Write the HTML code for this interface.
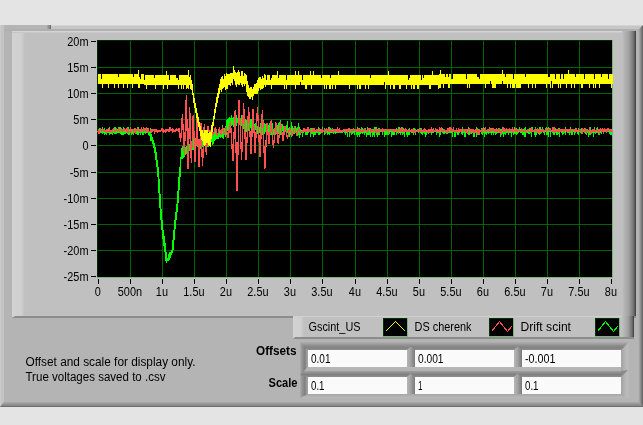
<!DOCTYPE html><html><head><meta charset="utf-8"><title>Scope</title>
<style>html,body{margin:0;padding:0;background:#e4e4e4;overflow:hidden}svg{display:block;transform:translateZ(0);will-change:transform}text{font-family:"Liberation Sans",sans-serif;font-size:12px;fill:#000}</style></head><body>
<svg width="643" height="425" viewBox="0 0 643 425">
<defs>
<linearGradient id="gl" x1="0" x2="1" y1="0" y2="0"><stop offset="0" stop-color="#d2d2d2"/><stop offset="0.7" stop-color="#d0d0d0"/><stop offset="1" stop-color="#c0c0c0"/></linearGradient>
<linearGradient id="gr" x1="0" x2="1" y1="0" y2="0"><stop offset="0" stop-color="#c0c0c0"/><stop offset="0.5" stop-color="#a0a0a0"/><stop offset="0.86" stop-color="#6c6c6c"/><stop offset="0.94" stop-color="#484848"/><stop offset="1" stop-color="#424242"/></linearGradient>
<linearGradient id="gre" x1="0" x2="1" y1="0" y2="0"><stop offset="0" stop-color="#b8b8b8"/><stop offset="0.4" stop-color="#b0b0b0"/><stop offset="1" stop-color="#5e5e5e"/></linearGradient>
<linearGradient id="gb" x1="0" x2="0" y1="0" y2="1"><stop offset="0" stop-color="#aaaaaa"/><stop offset="0.7" stop-color="#888888"/><stop offset="1" stop-color="#626262"/></linearGradient>
<linearGradient id="ft" x1="0" x2="0" y1="0" y2="1"><stop offset="0" stop-color="#a8a8a8"/><stop offset="0.3" stop-color="#8c8c8c"/><stop offset="0.55" stop-color="#848484"/><stop offset="1" stop-color="#a2a2a2"/></linearGradient>
<linearGradient id="fl" x1="0" x2="1" y1="0" y2="0"><stop offset="0" stop-color="#a8a8a8"/><stop offset="0.3" stop-color="#8c8c8c"/><stop offset="0.55" stop-color="#848484"/><stop offset="1" stop-color="#a2a2a2"/></linearGradient>
</defs>
<rect x="0" y="0" width="643" height="425" fill="#e4e4e4"/>
<rect x="0" y="25" width="643" height="382" fill="#b4b4b4"/>
<polygon points="0,25 4,25 4,402 0,407" fill="#c3c3c3"/>
<rect x="0" y="25" width="1" height="380" fill="#cacaca"/>
<rect x="51" y="25" width="592" height="4" fill="#c6c6c6"/>
<rect x="51" y="25" width="592" height="1" fill="#d4d4d4"/>
<rect x="47" y="25" width="1" height="4" fill="#a4a4a4"/><rect x="48" y="25" width="1" height="4" fill="#969696"/><rect x="49" y="25" width="1" height="4" fill="#868686"/><rect x="50" y="25" width="1" height="4" fill="#727272"/>
<rect x="4" y="29" width="635" height="2" fill="#b0b0b0"/>
<polygon points="0,407 4,402 643,402 643,407" fill="url(#gb)"/>
<polygon points="636,29 639,29 643,25 643,406 639,402 636,402" fill="url(#gre)"/>
<rect x="12" y="31" width="624" height="286" fill="#c0c0c0"/>
<rect x="12" y="31" width="13" height="286" fill="url(#gl)"/>
<rect x="12" y="31" width="612" height="1" fill="#d4d4d4"/><rect x="12" y="32" width="612" height="1" fill="#c8c8c8"/>
<rect x="622" y="31" width="14" height="286" fill="url(#gr)"/>
<polygon points="12,318 15,316 636,316 636,318" fill="#8c8c8c"/>
<rect x="97" y="40" width="515" height="237" fill="#000"/>
<path d="M130.5 40V277M162.5 40V277M194.5 40V277M226.5 40V277M258.5 40V277M290.5 40V277M322.5 40V277M355.5 40V277M387.5 40V277M419.5 40V277M451.5 40V277M483.5 40V277M515.5 40V277M547.5 40V277M579.5 40V277M97 67.5H612M97 93.5H612M97 119.5H612M97 145.5H612M97 172.5H612M97 198.5H612M97 224.5H612M97 250.5H612" stroke="#006400" stroke-width="1" fill="none" shape-rendering="crispEdges"/>
<rect x="97" y="40" width="1" height="237" fill="#002a00"/>
<rect x="97" y="40" width="515" height="1" fill="#002a00"/>
<rect x="612" y="40" width="1" height="238" fill="#7cb47c"/>
<rect x="97" y="277" width="516" height="1" fill="#7cb47c"/>
<path d="M98.5 279V284M130.5 279V284M162.5 279V284M194.5 279V284M226.5 279V284M258.5 279V284M290.5 279V284M322.5 279V284M355.5 279V284M387.5 279V284M419.5 279V284M451.5 279V284M483.5 279V284M515.5 279V284M547.5 279V284M579.5 279V284M611.5 279V284M91 41.5H96M91 67.5H96M91 93.5H96M91 119.5H96M91 145.5H96M91 172.5H96M91 198.5H96M91 224.5H96M91 250.5H96M91 276.5H96" stroke="#000" stroke-width="1" fill="none" shape-rendering="crispEdges"/>
<text transform="translate(88.5,45.8) scale(0.91,1)" text-anchor="end">20m</text>
<text transform="translate(88.5,71.8) scale(0.91,1)" text-anchor="end">15m</text>
<text transform="translate(88.5,97.8) scale(0.91,1)" text-anchor="end">10m</text>
<text transform="translate(88.5,123.8) scale(0.91,1)" text-anchor="end">5m</text>
<text transform="translate(88.5,149.8) scale(0.91,1)" text-anchor="end">0</text>
<text transform="translate(88.5,176.8) scale(0.91,1)" text-anchor="end">-5m</text>
<text transform="translate(88.5,202.8) scale(0.91,1)" text-anchor="end">-10m</text>
<text transform="translate(88.5,228.8) scale(0.91,1)" text-anchor="end">-15m</text>
<text transform="translate(88.5,254.8) scale(0.91,1)" text-anchor="end">-20m</text>
<text transform="translate(88.5,280.8) scale(0.91,1)" text-anchor="end">-25m</text>
<text transform="translate(97.9,296) scale(0.91,1)" text-anchor="middle">0</text>
<text transform="translate(129.9,296) scale(0.91,1)" text-anchor="middle">500n</text>
<text transform="translate(161.9,296) scale(0.91,1)" text-anchor="middle">1u</text>
<text transform="translate(193.9,296) scale(0.91,1)" text-anchor="middle">1.5u</text>
<text transform="translate(225.9,296) scale(0.91,1)" text-anchor="middle">2u</text>
<text transform="translate(257.9,296) scale(0.91,1)" text-anchor="middle">2.5u</text>
<text transform="translate(289.9,296) scale(0.91,1)" text-anchor="middle">3u</text>
<text transform="translate(321.9,296) scale(0.91,1)" text-anchor="middle">3.5u</text>
<text transform="translate(354.9,296) scale(0.91,1)" text-anchor="middle">4u</text>
<text transform="translate(386.9,296) scale(0.91,1)" text-anchor="middle">4.5u</text>
<text transform="translate(418.9,296) scale(0.91,1)" text-anchor="middle">5u</text>
<text transform="translate(450.9,296) scale(0.91,1)" text-anchor="middle">5.5u</text>
<text transform="translate(482.9,296) scale(0.91,1)" text-anchor="middle">6u</text>
<text transform="translate(514.9,296) scale(0.91,1)" text-anchor="middle">6.5u</text>
<text transform="translate(546.9,296) scale(0.91,1)" text-anchor="middle">7u</text>
<text transform="translate(578.9,296) scale(0.91,1)" text-anchor="middle">7.5u</text>
<text transform="translate(610.9,296) scale(0.91,1)" text-anchor="middle">8u</text>
<path d="M98.5 129V134M99.5 128V133M100.5 130V133M101.5 129V133M102.5 127V134M103.5 130V133M104.5 128V135M105.5 130V134M106.5 130V135M107.5 130V133M108.5 129V133M109.5 127V135M110.5 130V134M111.5 130V134M112.5 129V135M113.5 129V133M114.5 127V134M115.5 127V134M116.5 130V134M117.5 129V133M118.5 127V133M119.5 127V133M120.5 127V134M121.5 128V135M122.5 129V135M123.5 127V135M124.5 129V134M125.5 129V134M126.5 129V133M127.5 127V134M128.5 127V135M129.5 129V135M130.5 129V133M131.5 130V135M132.5 129V134M133.5 129V135M134.5 128V133M135.5 130V134M136.5 129V134M137.5 127V135M138.5 127V135M139.5 130V133M140.5 129V135M141.5 130V133M142.5 129V135M143.5 129V135M144.5 129V133M145.5 128V134M146.5 129V133M147.5 128V133M148.5 130V135M149.5 131V136M150.5 128V141M151.5 134V141M152.5 137V144M153.5 140V148M154.5 143V153M155.5 147V160M156.5 152V167M157.5 160V177M158.5 167V193M159.5 179V208M160.5 194V220M161.5 209V230M162.5 220V239M163.5 230V246M164.5 236V252M165.5 243V261M166.5 252V263M167.5 258V261M168.5 254V261M169.5 252V260M170.5 252V258M171.5 250V255M172.5 240V253M173.5 230V250M174.5 220V240M175.5 212V229M176.5 204V220M177.5 191V212M178.5 177V203M179.5 167V190M180.5 157V177M181.5 148V159M182.5 146V159M183.5 151V158M184.5 144V157M185.5 147V155M186.5 146V154M187.5 145V152M188.5 145V155M189.5 144V151M190.5 138V153M191.5 142V149M192.5 143V150M193.5 139V150M194.5 141V149M195.5 138V149M196.5 139V146M197.5 140V146M198.5 140V150M199.5 140V147M200.5 139V149M201.5 134V145M202.5 136V147M203.5 140V145M204.5 135V145M205.5 135V145M206.5 135V146M207.5 138V147M208.5 134V147M209.5 137V143M210.5 136V143M211.5 136V142M212.5 130V145M213.5 134V144M214.5 133V141M215.5 128V140M216.5 134V139M217.5 133V139M218.5 129V139M219.5 131V137M220.5 130V138M221.5 129V137M222.5 125V138M223.5 128V139M224.5 128V134M225.5 126V137M226.5 120V135M227.5 119V131M228.5 118V130M229.5 117V128M230.5 118V128M231.5 115V126M232.5 118V125M233.5 117V127M234.5 111V122M235.5 110V121M236.5 115V126M237.5 118V123M238.5 117V124M239.5 117V124M240.5 120V129M241.5 115V126M242.5 122V131M243.5 121V129M244.5 122V133M245.5 119V134M246.5 120V132M247.5 119V132M248.5 119V131M249.5 120V130M250.5 119V128M251.5 119V132M252.5 120V127M253.5 122V132M254.5 124V130M255.5 123V130M256.5 125V133M257.5 126V134M258.5 127V137M259.5 127V133M260.5 123V136M261.5 126V133M262.5 125V135M263.5 120V135M264.5 123V134M265.5 124V132M266.5 124V131M267.5 124V131M268.5 125V136M269.5 123V132M270.5 124V135M271.5 122V135M272.5 123V134M273.5 129V135M274.5 128V133M275.5 126V135M276.5 128V133M277.5 125V133M278.5 123V134M279.5 122V132M280.5 120V135M281.5 124V131M282.5 124V131M283.5 126V136M284.5 127V134M285.5 127V132M286.5 125V132M287.5 121V133M288.5 128V135M289.5 128V137M290.5 128V135M291.5 122V137M292.5 126V134M293.5 128V134M294.5 128V134M295.5 126V133M296.5 128V135M297.5 127V136M298.5 123V135M299.5 127V138M300.5 129V135M301.5 130V133M302.5 130V137M303.5 131V133M304.5 131V132M305.5 131V135M306.5 129V135M307.5 130V135M308.5 129V133M309.5 129V132M310.5 128V137M311.5 128V134M312.5 128V134M313.5 129V137M314.5 129V135M315.5 130V135M316.5 130V133M317.5 130V133M318.5 127V135M319.5 128V135M320.5 130V134M321.5 130V132M322.5 127V133M323.5 131V132M324.5 128V135M325.5 130V134M326.5 130V132M327.5 131V135M328.5 127V134M329.5 127V135M330.5 128V133M331.5 129V133M332.5 128V133M333.5 131V134M334.5 130V133M335.5 130V134M336.5 131V133M337.5 130V133M338.5 129V133M339.5 130V132M340.5 130V133M341.5 130V133M342.5 131V133M343.5 129V132M344.5 129V133M345.5 129V135M346.5 130V133M347.5 129V137M348.5 131V132M349.5 130V137M350.5 131V133M351.5 129V135M352.5 131V134M353.5 131V133M354.5 130V135M355.5 130V132M356.5 129V135M357.5 127V137M358.5 130V135M359.5 128V137M360.5 129V134M361.5 127V133M362.5 128V134M363.5 130V133M364.5 128V135M365.5 128V133M366.5 131V137M367.5 127V135M368.5 129V135M369.5 129V135M370.5 128V137M371.5 129V133M372.5 129V137M373.5 129V135M374.5 127V137M375.5 127V132M376.5 127V135M377.5 129V137M378.5 128V135M379.5 128V135M380.5 130V132M381.5 131V132M382.5 130V135M383.5 130V132M384.5 129V137M385.5 129V135M386.5 131V135M387.5 131V135M388.5 129V135M389.5 130V134M390.5 130V132M391.5 129V137M392.5 131V135M393.5 129V135M394.5 131V135M395.5 129V132M396.5 128V135M397.5 129V133M398.5 127V132M399.5 127V133M400.5 130V135M401.5 127V133M402.5 130V135M403.5 128V134M404.5 129V137M405.5 129V132M406.5 129V135M407.5 130V137M408.5 131V135M409.5 128V135M410.5 130V132M411.5 129V133M412.5 130V133M413.5 128V135M414.5 128V133M415.5 129V135M416.5 130V132M417.5 129V132M418.5 129V133M419.5 128V132M420.5 128V133M421.5 128V134M422.5 130V135M423.5 129V133M424.5 129V134M425.5 129V137M426.5 131V135M427.5 130V133M428.5 131V134M429.5 131V133M430.5 129V132M431.5 127V135M432.5 129V133M433.5 129V133M434.5 130V132M435.5 129V132M436.5 130V135M437.5 129V133M438.5 130V133M439.5 129V137M440.5 128V135M441.5 130V132M442.5 128V133M443.5 130V134M444.5 129V134M445.5 131V133M446.5 131V134M447.5 128V134M448.5 129V133M449.5 128V133M450.5 129V133M451.5 129V133M452.5 131V137M453.5 130V132M454.5 130V137M455.5 130V137M456.5 129V132M457.5 130V135M458.5 131V135M459.5 130V133M460.5 130V132M461.5 129V134M462.5 127V135M463.5 131V133M464.5 129V137M465.5 130V137M466.5 131V133M467.5 131V132M468.5 127V135M469.5 130V135M470.5 130V133M471.5 130V134M472.5 129V133M473.5 130V137M474.5 130V137M475.5 129V132M476.5 127V137M477.5 128V134M478.5 129V135M479.5 130V135M480.5 131V132M481.5 128V134M482.5 129V135M483.5 127V133M484.5 128V137M485.5 130V134M486.5 131V135M487.5 130V133M488.5 129V134M489.5 130V133M490.5 130V133M491.5 128V135M492.5 128V133M493.5 129V135M494.5 130V133M495.5 129V135M496.5 128V134M497.5 131V133M498.5 128V133M499.5 131V133M500.5 129V137M501.5 129V135M502.5 130V134M503.5 130V137M504.5 129V134M505.5 130V135M506.5 130V133M507.5 131V133M508.5 130V135M509.5 131V133M510.5 130V133M511.5 130V137M512.5 129V133M513.5 131V135M514.5 127V134M515.5 129V134M516.5 128V135M517.5 130V134M518.5 130V133M519.5 127V132M520.5 129V133M521.5 129V133M522.5 130V135M523.5 129V135M524.5 128V137M525.5 127V137M526.5 130V132M527.5 130V133M528.5 129V134M529.5 128V134M530.5 129V133M531.5 127V137M532.5 127V132M533.5 130V132M534.5 129V135M535.5 127V137M536.5 129V135M537.5 129V132M538.5 131V134M539.5 127V135M540.5 127V134M541.5 129V133M542.5 127V132M543.5 130V133M544.5 130V135M545.5 128V132M546.5 127V135M547.5 128V135M548.5 127V137M549.5 129V132M550.5 129V137M551.5 131V132M552.5 127V133M553.5 130V135M554.5 131V135M555.5 128V133M556.5 130V135M557.5 130V135M558.5 128V134M559.5 128V137M560.5 131V132M561.5 131V133M562.5 129V135M563.5 130V134M564.5 130V133M565.5 127V135M566.5 131V132M567.5 129V133M568.5 129V133M569.5 130V135M570.5 127V133M571.5 129V135M572.5 130V135M573.5 130V132M574.5 129V135M575.5 128V133M576.5 131V132M577.5 130V134M578.5 128V135M579.5 129V132M580.5 130V133M581.5 128V134M582.5 130V133M583.5 129V132M584.5 128V133M585.5 128V134M586.5 130V135M587.5 129V133M588.5 131V137M589.5 130V135M590.5 127V135M591.5 131V133M592.5 129V133M593.5 130V137M594.5 127V133M595.5 130V134M596.5 130V133M597.5 127V133M598.5 131V135M599.5 129V135M600.5 130V133M601.5 129V134M602.5 128V132M603.5 129V133M604.5 129V132M605.5 130V132M606.5 129V133M607.5 129V132M608.5 128V132M609.5 130V134M610.5 129V135M611.5 130V135M612.5 131V132" stroke="#00ff00" stroke-width="1" fill="none" shape-rendering="crispEdges"/>
<polyline points="98.0,131.8 98.5,129.6 99.0,133.7 99.5,131.5 100.0,130.3 100.5,129.2 101.0,130.3 101.5,130.7 102.0,130.1 102.5,129.9 103.0,129.3 103.5,129.6 104.0,130.3 104.5,131.2 105.0,130.9 105.5,130.9 106.0,130.1 106.5,131.4 107.0,129.6 107.5,130.8 108.0,130.0 108.5,129.1 109.0,131.1 109.5,129.9 110.0,130.8 110.5,131.8 111.0,131.5 111.5,131.1 112.0,131.3 112.5,131.7 113.0,129.4 113.5,129.0 114.0,129.9 114.5,129.5 115.0,131.6 115.5,131.4 116.0,130.5 116.5,129.5 117.0,130.9 117.5,130.6 118.0,130.3 118.5,129.2 119.0,129.6 119.5,132.0 120.0,129.5 120.5,130.4 121.0,129.7 121.5,131.3 122.0,131.3 122.5,129.8 123.0,129.8 123.5,130.3 124.0,129.7 124.5,131.7 125.0,129.2 125.5,129.7 126.0,130.9 126.5,127.9 127.0,130.4 127.5,131.5 128.0,129.1 128.5,129.4 129.0,131.9 129.5,131.8 130.0,131.6 130.5,129.8 131.0,131.8 131.5,130.8 132.0,129.7 132.5,129.4 133.0,129.8 133.5,131.0 134.0,129.0 134.5,131.0 135.0,129.9 135.5,131.4 136.0,129.2 136.5,130.2 137.0,130.9 137.5,129.5 138.0,130.2 138.5,129.9 139.0,129.9 139.5,130.1 140.0,131.6 140.5,130.1 141.0,131.2 141.5,129.0 142.0,130.3 142.5,130.2 143.0,130.4 143.5,129.0 144.0,130.9 144.5,129.3 145.0,130.1 145.5,129.4 146.0,130.6 146.5,129.3 147.0,131.4 147.5,129.6 148.0,131.8 148.5,130.4 149.0,131.8 149.5,131.7 150.0,131.5 150.5,131.4 151.0,130.2 151.5,131.5 152.0,129.7 152.5,130.6 153.0,129.4 153.5,131.2 154.0,129.1 154.5,133.8 155.0,129.4 155.5,130.7 156.0,129.9 156.5,130.7 157.0,131.0 157.5,132.8 158.0,130.4 158.5,130.9 159.0,131.5 159.5,130.2 160.0,130.1 160.5,131.4 161.0,131.0 161.5,129.4 162.0,129.9 162.5,129.2 163.0,131.7 163.5,128.9 164.0,132.0 164.5,131.4 165.0,131.9 165.5,131.9 166.0,129.5 166.5,131.8 167.0,130.1 167.5,129.5 168.0,129.8 168.5,129.4 169.0,131.8 169.5,129.8 170.0,127.5 170.5,130.2 171.0,129.8 171.5,130.1 172.0,129.8 172.5,129.1 173.0,131.9 173.5,130.6 174.0,131.7 174.5,130.6 175.0,131.2 175.5,130.1 176.0,129.4 176.5,129.2 177.0,130.8 177.5,129.9 178.0,129.9 178.5,131.6 179.0,128.1 180.6,141.8 182.4,113.9 184.4,155.9 186.3,95.2 188.1,169.0 189.7,107.3 191.3,162.6 193.2,114.6 195.1,162.1 197.1,118.3 198.9,167.0 200.9,123.5 202.5,166.4 204.3,124.4 206.3,154.5 208.1,126.4 210.0,136.1 211.9,127.0 213.5,135.5 215.4,127.3 217.4,135.7 219.4,127.6 221.0,134.9 222.6,127.1 224.4,135.3 226.0,127.6 228.2,137.7 230.4,120.8 232.9,161.0 235.1,110.8 237.1,191.0 239.1,99.7 241.6,159.6 243.6,103.5 246.1,159.7 248.6,107.4 251.1,153.9 253.1,108.9 255.1,152.9 257.5,107.1 259.9,157.0 262.4,109.7 264.8,169.0 267.0,122.6 269.0,143.5 271.2,120.4 273.4,147.7 275.8,122.5 278.3,144.1 280.5,121.9 283.0,141.0 285.0,126.2 287.5,138.4 289.7,127.3 292.1,135.3 294.6,127.8 296.6,134.1 298.8,128.8 300.8,133.0 303.0,130.0 303.5,129.1 304.0,131.1 304.5,131.1 305.0,129.2 305.5,130.1 306.0,131.5 306.5,129.2 307.0,131.7 307.5,129.3 308.0,126.8 308.5,131.5 309.0,129.9 309.5,129.3 310.0,129.6 310.5,132.8 311.0,131.8 311.5,131.3 312.0,131.3 312.5,130.4 313.0,131.2 313.5,129.1 314.0,129.3 314.5,129.1 315.0,131.1 315.5,130.7 316.0,130.3 316.5,129.9 317.0,129.2 317.5,129.3 318.0,131.5 318.5,130.8 319.0,130.5 319.5,129.5 320.0,131.8 320.5,129.5 321.0,131.3 321.5,132.0 322.0,129.3 322.5,129.3 323.0,131.7 323.5,130.3 324.0,130.1 324.5,130.3 325.0,129.5 325.5,130.9 326.0,129.4 326.5,131.1 327.0,129.1 327.5,130.6 328.0,130.4 328.5,130.0 329.0,131.1 329.5,129.7 330.0,130.9 330.5,130.5 331.0,131.3 331.5,130.9 332.0,131.9 332.5,130.8 333.0,129.7 333.5,129.8 334.0,132.0 334.5,131.0 335.0,129.5 335.5,129.9 336.0,129.8 336.5,131.7 337.0,131.7 337.5,129.0 338.0,130.3 338.5,131.9 339.0,129.1 339.5,128.7 340.0,131.7 340.5,130.7 341.0,130.3 341.5,131.2 342.0,131.3 342.5,131.6 343.0,130.9 343.5,129.9 344.0,129.3 344.5,131.3 345.0,130.9 345.5,130.3 346.0,130.9 346.5,131.0 347.0,129.5 347.5,131.3 348.0,130.5 348.5,129.1 349.0,129.5 349.5,131.8 350.0,129.3 350.5,130.6 351.0,130.5 351.5,131.5 352.0,130.2 352.5,129.6 353.0,130.2 353.5,129.4 354.0,130.1 354.5,129.8 355.0,129.0 355.5,130.3 356.0,130.1 356.5,129.7 357.0,131.8 357.5,129.7 358.0,130.2 358.5,129.4 359.0,131.4 359.5,130.4 360.0,129.7 360.5,130.1 361.0,131.5 361.5,130.4 362.0,130.6 362.5,131.5 363.0,131.6 363.5,130.1 364.0,130.3 364.5,129.0 365.0,129.8 365.5,129.9 366.0,130.3 366.5,131.0 367.0,131.8 367.5,129.2 368.0,131.7 368.5,129.4 369.0,128.4 369.5,129.6 370.0,129.9 370.5,130.7 371.0,129.6 371.5,131.4 372.0,130.2 372.5,130.8 373.0,131.9 373.5,131.7 374.0,130.9 374.5,130.5 375.0,129.2 375.5,131.0 376.0,129.4 376.5,131.5 377.0,130.7 377.5,131.7 378.0,129.7 378.5,130.8 379.0,129.5 379.5,131.1 380.0,129.9 380.5,130.3 381.0,131.0 381.5,130.1 382.0,129.1 382.5,131.2 383.0,131.4 383.5,130.5 384.0,129.4 384.5,130.2 385.0,129.3 385.5,130.0 386.0,130.7 386.5,129.9 387.0,129.8 387.5,129.9 388.0,130.5 388.5,132.0 389.0,130.0 389.5,130.5 390.0,129.6 390.5,129.4 391.0,129.3 391.5,130.2 392.0,130.2 392.5,130.2 393.0,129.1 393.5,130.4 394.0,129.2 394.5,130.6 395.0,129.4 395.5,131.1 396.0,131.7 396.5,130.9 397.0,131.0 397.5,130.3 398.0,129.3 398.5,131.4 399.0,129.8 399.5,130.3 400.0,130.3 400.5,131.8 401.0,128.2 401.5,131.3 402.0,131.1 402.5,129.2 403.0,130.8 403.5,131.0 404.0,131.3 404.5,129.2 405.0,131.7 405.5,127.8 406.0,132.0 406.5,129.7 407.0,130.4 407.5,130.7 408.0,131.2 408.5,130.1 409.0,131.1 409.5,131.3 410.0,130.7 410.5,131.0 411.0,131.7 411.5,129.1 412.0,131.6 412.5,130.9 413.0,129.9 413.5,131.9 414.0,130.8 414.5,131.8 415.0,130.4 415.5,131.9 416.0,131.9 416.5,131.4 417.0,131.3 417.5,129.8 418.0,130.0 418.5,130.9 419.0,131.4 419.5,131.6 420.0,129.0 420.5,131.5 421.0,131.9 421.5,130.2 422.0,131.3 422.5,130.4 423.0,130.0 423.5,129.5 424.0,131.3 424.5,129.9 425.0,131.7 425.5,129.4 426.0,131.4 426.5,131.3 427.0,130.6 427.5,130.5 428.0,131.4 428.5,131.9 429.0,129.2 429.5,131.1 430.0,133.3 430.5,130.4 431.0,131.4 431.5,129.7 432.0,131.7 432.5,130.6 433.0,130.8 433.5,129.6 434.0,131.1 434.5,130.7 435.0,130.6 435.5,129.1 436.0,130.1 436.5,130.9 437.0,129.5 437.5,130.0 438.0,131.6 438.5,130.8 439.0,131.8 439.5,129.3 440.0,130.8 440.5,129.4 441.0,130.0 441.5,127.6 442.0,130.7 442.5,130.4 443.0,131.7 443.5,130.8 444.0,129.4 444.5,129.8 445.0,130.9 445.5,131.0 446.0,130.3 446.5,131.9 447.0,132.2 447.5,131.8 448.0,128.2 448.5,129.8 449.0,131.2 449.5,130.5 450.0,127.5 450.5,131.0 451.0,130.8 451.5,129.3 452.0,129.8 452.5,130.4 453.0,129.7 453.5,128.5 454.0,131.4 454.5,131.5 455.0,130.9 455.5,131.2 456.0,131.9 456.5,127.7 457.0,130.4 457.5,131.5 458.0,130.9 458.5,129.7 459.0,131.1 459.5,129.4 460.0,129.8 460.5,129.5 461.0,131.5 461.5,129.5 462.0,130.0 462.5,129.3 463.0,129.2 463.5,131.0 464.0,130.4 464.5,129.8 465.0,130.1 465.5,132.0 466.0,129.3 466.5,131.7 467.0,131.2 467.5,134.4 468.0,130.5 468.5,131.4 469.0,129.9 469.5,129.1 470.0,129.8 470.5,131.5 471.0,129.7 471.5,130.8 472.0,131.7 472.5,131.3 473.0,129.4 473.5,130.9 474.0,132.4 474.5,131.5 475.0,130.6 475.5,129.8 476.0,131.8 476.5,130.2 477.0,129.4 477.5,129.7 478.0,134.5 478.5,130.7 479.0,130.1 479.5,131.9 480.0,130.1 480.5,131.5 481.0,131.3 481.5,130.7 482.0,129.9 482.5,131.2 483.0,129.1 483.5,129.4 484.0,129.3 484.5,129.5 485.0,130.7 485.5,129.1 486.0,131.2 486.5,131.5 487.0,130.4 487.5,130.3 488.0,129.3 488.5,129.8 489.0,130.8 489.5,129.3 490.0,131.7 490.5,129.7 491.0,131.0 491.5,130.2 492.0,129.1 492.5,131.1 493.0,128.3 493.5,131.3 494.0,129.7 494.5,130.3 495.0,131.4 495.5,131.4 496.0,129.2 496.5,131.9 497.0,129.7 497.5,130.9 498.0,130.6 498.5,130.3 499.0,129.1 499.5,131.9 500.0,131.8 500.5,131.4 501.0,134.2 501.5,131.8 502.0,130.9 502.5,129.1 503.0,126.9 503.5,131.9 504.0,129.9 504.5,129.4 505.0,131.9 505.5,129.8 506.0,130.6 506.5,129.4 507.0,129.9 507.5,129.9 508.0,129.3 508.5,131.5 509.0,130.7 509.5,129.6 510.0,130.4 510.5,130.8 511.0,129.9 511.5,129.7 512.0,130.1 512.5,129.0 513.0,131.6 513.5,130.7 514.0,129.9 514.5,129.9 515.0,129.5 515.5,131.6 516.0,129.2 516.5,130.3 517.0,129.3 517.5,131.9 518.0,129.5 518.5,130.1 519.0,130.8 519.5,131.5 520.0,131.2 520.5,131.3 521.0,131.4 521.5,131.7 522.0,129.1 522.5,130.5 523.0,130.7 523.5,131.4 524.0,130.8 524.5,130.4 525.0,131.2 525.5,130.2 526.0,130.2 526.5,131.4 527.0,130.5 527.5,129.6 528.0,129.4 528.5,130.7 529.0,131.8 529.5,131.5 530.0,131.9 530.5,130.3 531.0,129.0 531.5,130.7 532.0,131.8 532.5,130.6 533.0,130.6 533.5,131.1 534.0,130.1 534.5,130.1 535.0,131.0 535.5,129.3 536.0,130.2 536.5,130.7 537.0,131.9 537.5,130.3 538.0,132.0 538.5,130.6 539.0,129.5 539.5,131.9 540.0,130.5 540.5,131.7 541.0,131.5 541.5,131.7 542.0,129.5 542.5,130.5 543.0,129.6 543.5,130.9 544.0,130.1 544.5,130.9 545.0,130.2 545.5,129.9 546.0,129.0 546.5,131.5 547.0,131.0 547.5,130.5 548.0,129.8 548.5,130.6 549.0,130.7 549.5,129.4 550.0,131.3 550.5,129.3 551.0,130.6 551.5,130.8 552.0,131.7 552.5,129.4 553.0,127.3 553.5,131.6 554.0,129.2 554.5,128.4 555.0,131.7 555.5,131.9 556.0,130.9 556.5,129.1 557.0,131.6 557.5,131.7 558.0,129.9 558.5,131.9 559.0,131.8 559.5,130.2 560.0,129.7 560.5,131.6 561.0,131.4 561.5,129.5 562.0,129.6 562.5,129.9 563.0,129.3 563.5,130.2 564.0,129.2 564.5,131.5 565.0,129.7 565.5,129.9 566.0,129.1 566.5,130.0 567.0,131.1 567.5,129.8 568.0,129.4 568.5,131.5 569.0,129.5 569.5,131.2 570.0,131.9 570.5,131.9 571.0,129.7 571.5,129.4 572.0,129.8 572.5,130.8 573.0,129.7 573.5,129.6 574.0,129.4 574.5,130.6 575.0,131.3 575.5,131.0 576.0,129.9 576.5,129.3 577.0,131.6 577.5,131.0 578.0,130.7 578.5,130.5 579.0,129.2 579.5,129.7 580.0,131.2 580.5,130.2 581.0,131.3 581.5,131.6 582.0,132.3 582.5,134.2 583.0,129.7 583.5,130.1 584.0,129.5 584.5,131.7 585.0,131.1 585.5,129.1 586.0,129.6 586.5,132.6 587.0,130.9 587.5,130.7 588.0,130.5 588.5,131.8 589.0,130.7 589.5,129.3 590.0,131.0 590.5,131.6 591.0,131.1 591.5,133.5 592.0,129.6 592.5,131.2 593.0,131.1 593.5,131.2 594.0,129.8 594.5,131.8 595.0,131.8 595.5,131.2 596.0,130.9 596.5,129.2 597.0,130.3 597.5,131.8 598.0,131.3 598.5,131.1 599.0,129.8 599.5,131.9 600.0,130.6 600.5,129.2 601.0,130.2 601.5,129.9 602.0,131.1 602.5,129.7 603.0,130.5 603.5,131.8 604.0,129.9 604.5,129.4 605.0,130.0 605.5,130.6 606.0,129.5 606.5,130.8 607.0,131.3 607.5,129.3 608.0,130.1 608.5,129.2 609.0,129.6 609.5,130.3 610.0,130.0 610.5,130.1 611.0,131.7 611.5,129.3 612.0,131.9" stroke="#ff5050" stroke-width="1.3" fill="none" shape-rendering="crispEdges"/>
<path d="M98.5 74V84M99.5 74V84M100.5 74V84M101.5 79V84M102.5 74V88M103.5 74V84M104.5 74V84M105.5 74V84M106.5 74V84M107.5 74V84M108.5 74V88M109.5 74V84M110.5 74V84M111.5 74V84M112.5 74V84M113.5 74V84M114.5 74V88M115.5 74V84M116.5 74V84M117.5 74V84M118.5 77V88M119.5 74V84M120.5 74V84M121.5 74V84M122.5 74V84M123.5 74V88M124.5 74V84M125.5 74V84M126.5 74V84M127.5 74V88M128.5 74V84M129.5 74V84M130.5 74V84M131.5 74V84M132.5 74V88M133.5 77V84M134.5 74V84M135.5 74V84M136.5 74V84M137.5 74V84M138.5 70V88M139.5 77V88M140.5 79V84M141.5 74V84M142.5 74V84M143.5 74V84M144.5 80V85M145.5 75V85M146.5 75V89M147.5 75V85M148.5 75V85M149.5 75V85M150.5 75V85M151.5 75V85M152.5 75V85M153.5 75V85M154.5 78V85M155.5 75V89M156.5 75V85M157.5 75V85M158.5 75V85M159.5 75V85M160.5 75V85M161.5 75V85M162.5 75V85M163.5 75V89M164.5 75V85M165.5 75V85M166.5 71V85M167.5 75V89M168.5 75V85M169.5 80V85M170.5 75V85M171.5 75V85M172.5 75V85M173.5 75V85M174.5 75V85M175.5 75V85M176.5 78V85M177.5 78V85M178.5 80V89M179.5 75V85M180.5 75V85M181.5 75V89M182.5 75V85M183.5 75V89M184.5 75V85M185.5 75V85M186.5 75V89M187.5 75V88M188.5 70V89M189.5 77V85M190.5 75V89M191.5 80V90M192.5 84V95M193.5 93V103M194.5 98V108M195.5 103V113M196.5 108V118M197.5 113V123M198.5 117V127M199.5 122V131M200.5 126V136M201.5 130V140M202.5 130V141M203.5 133V145M204.5 130V146M205.5 130V145M206.5 130V143M207.5 130V143M208.5 133V145M209.5 132V146M210.5 132V147M211.5 125V139M212.5 122V132M213.5 116V126M214.5 109V119M215.5 103V113M216.5 97V107M217.5 93V103M218.5 88V98M219.5 84V94M220.5 79V90M221.5 77V92M222.5 76V89M223.5 79V88M224.5 74V87M225.5 76V90M226.5 73V89M227.5 74V89M228.5 74V85M229.5 74V85M230.5 73V86M231.5 73V83M232.5 73V85M233.5 66V79M234.5 70V81M235.5 72V85M236.5 73V87M237.5 72V84M238.5 70V85M239.5 72V85M240.5 76V83M241.5 71V85M242.5 71V87M243.5 76V84M244.5 73V86M245.5 74V84M246.5 75V92M247.5 81V96M248.5 85V97M249.5 88V99M250.5 87V99M251.5 87V97M252.5 89V100M253.5 87V96M254.5 84V94M255.5 84V94M256.5 83V94M257.5 80V94M258.5 78V91M259.5 77V88M260.5 77V90M261.5 79V89M262.5 76V89M263.5 78V88M264.5 74V85M265.5 75V87M266.5 80V85M267.5 75V85M268.5 75V85M269.5 75V85M270.5 80V85M271.5 78V89M272.5 75V85M273.5 75V85M274.5 75V85M275.5 75V85M276.5 75V85M277.5 71V85M278.5 78V85M279.5 75V85M280.5 75V85M281.5 75V85M282.5 75V85M283.5 75V85M284.5 75V89M285.5 75V85M286.5 80V89M287.5 75V85M288.5 75V85M289.5 75V85M290.5 75V85M291.5 75V85M292.5 75V85M293.5 75V85M294.5 75V85M295.5 71V89M296.5 75V85M297.5 75V85M298.5 71V85M299.5 75V85M300.5 75V82M301.5 75V85M302.5 80V85M303.5 75V85M304.5 75V85M305.5 75V89M306.5 75V89M307.5 75V85M308.5 75V85M309.5 75V85M310.5 71V85M311.5 75V89M312.5 75V85M313.5 71V85M314.5 75V85M315.5 75V85M316.5 75V85M317.5 75V85M318.5 75V85M319.5 75V85M320.5 75V85M321.5 78V85M322.5 75V85M323.5 75V85M324.5 75V89M325.5 75V85M326.5 75V89M327.5 75V85M328.5 75V85M329.5 75V89M330.5 78V89M331.5 75V85M332.5 75V89M333.5 75V85M334.5 75V85M335.5 75V89M336.5 75V85M337.5 75V85M338.5 71V85M339.5 75V85M340.5 75V85M341.5 75V85M342.5 75V85M343.5 75V85M344.5 75V85M345.5 75V85M346.5 75V85M347.5 75V85M348.5 75V85M349.5 75V89M350.5 75V85M351.5 75V85M352.5 75V85M353.5 75V85M354.5 75V85M355.5 75V85M356.5 75V85M357.5 75V89M358.5 75V85M359.5 75V89M360.5 75V89M361.5 75V85M362.5 75V85M363.5 75V85M364.5 75V85M365.5 75V89M366.5 75V85M367.5 75V85M368.5 75V89M369.5 75V85M370.5 78V85M371.5 75V85M372.5 75V85M373.5 75V85M374.5 75V85M375.5 75V85M376.5 75V85M377.5 75V85M378.5 75V85M379.5 75V85M380.5 75V85M381.5 75V85M382.5 75V85M383.5 75V85M384.5 75V82M385.5 75V89M386.5 75V85M387.5 75V85M388.5 71V85M389.5 75V85M390.5 75V89M391.5 75V85M392.5 75V85M393.5 75V89M394.5 75V89M395.5 75V85M396.5 75V85M397.5 75V85M398.5 75V85M399.5 75V89M400.5 75V89M401.5 75V85M402.5 75V85M403.5 75V85M404.5 75V85M405.5 75V85M406.5 75V89M407.5 75V85M408.5 80V85M409.5 78V85M410.5 75V85M411.5 75V89M412.5 75V85M413.5 75V89M414.5 75V89M415.5 75V85M416.5 75V85M417.5 75V89M418.5 75V89M419.5 75V85M420.5 75V85M421.5 80V85M422.5 75V85M423.5 78V85M424.5 75V85M425.5 75V85M426.5 75V85M427.5 75V85M428.5 75V85M429.5 75V89M430.5 75V89M431.5 75V85M432.5 71V85M433.5 75V85M434.5 75V85M435.5 75V85M436.5 75V85M437.5 75V85M438.5 75V89M439.5 74V88M440.5 70V88M441.5 74V84M442.5 74V84M443.5 74V88M444.5 74V84M445.5 77V84M446.5 74V84M447.5 74V84M448.5 77V88M449.5 74V88M450.5 74V84M451.5 79V84M452.5 79V84M453.5 74V84M454.5 74V84M455.5 74V84M456.5 74V84M457.5 74V84M458.5 74V84M459.5 74V84M460.5 74V84M461.5 74V84M462.5 74V84M463.5 74V84M464.5 74V84M465.5 74V84M466.5 79V84M467.5 74V88M468.5 74V84M469.5 74V88M470.5 74V84M471.5 74V84M472.5 74V84M473.5 74V84M474.5 74V84M475.5 74V84M476.5 74V84M477.5 77V84M478.5 77V84M479.5 79V84M480.5 74V84M481.5 74V84M482.5 74V84M483.5 74V84M484.5 74V84M485.5 74V88M486.5 74V84M487.5 74V84M488.5 74V84M489.5 74V84M490.5 74V81M491.5 74V84M492.5 74V88M493.5 74V88M494.5 74V88M495.5 74V88M496.5 74V84M497.5 74V84M498.5 74V84M499.5 74V84M500.5 74V84M501.5 74V84M502.5 70V81M503.5 74V84M504.5 74V84M505.5 77V84M506.5 74V84M507.5 74V88M508.5 74V84M509.5 74V84M510.5 74V88M511.5 74V84M512.5 74V88M513.5 79V88M514.5 74V88M515.5 74V84M516.5 74V88M517.5 74V88M518.5 74V88M519.5 74V88M520.5 74V88M521.5 74V84M522.5 74V84M523.5 74V84M524.5 74V84M525.5 77V84M526.5 74V84M527.5 74V84M528.5 74V88M529.5 74V84M530.5 74V84M531.5 74V84M532.5 74V88M533.5 74V84M534.5 74V84M535.5 74V88M536.5 74V84M537.5 74V84M538.5 74V84M539.5 74V84M540.5 74V84M541.5 74V84M542.5 74V84M543.5 74V84M544.5 74V84M545.5 74V84M546.5 74V88M547.5 74V84M548.5 77V84M549.5 77V84M550.5 74V88M551.5 74V81M552.5 74V88M553.5 74V84M554.5 74V84M555.5 79V84M556.5 74V84M557.5 74V84M558.5 74V88M559.5 74V84M560.5 79V88M561.5 74V84M562.5 74V84M563.5 79V84M564.5 74V84M565.5 74V84M566.5 74V88M567.5 74V84M568.5 70V84M569.5 74V84M570.5 74V84M571.5 74V88M572.5 74V84M573.5 74V84M574.5 74V88M575.5 77V84M576.5 74V84M577.5 74V84M578.5 74V84M579.5 74V84M580.5 74V84M581.5 74V88M582.5 74V88M583.5 74V84M584.5 79V84M585.5 74V84M586.5 74V84M587.5 74V84M588.5 74V84M589.5 74V88M590.5 74V84M591.5 74V84M592.5 74V84M593.5 74V88M594.5 79V84M595.5 74V88M596.5 74V84M597.5 74V84M598.5 74V84M599.5 74V88M600.5 74V84M601.5 77V84M602.5 74V84M603.5 74V84M604.5 74V84M605.5 74V84M606.5 74V84M607.5 74V84M608.5 79V84M609.5 74V84M610.5 74V84M611.5 74V88M612.5 74V84" stroke="#ffff00" stroke-width="1" fill="none" shape-rendering="crispEdges"/>
<rect x="293" y="316" width="341" height="22" fill="#c0c0c0"/>
<rect x="293" y="316" width="11" height="22" fill="url(#gl)"/>
<rect x="293" y="316" width="341" height="1" fill="#d0d0d0"/>
<rect x="622" y="316" width="12" height="22" fill="url(#gr)"/>
<polygon points="293,339 295,337 634,337 634,339" fill="#8c8c8c"/>
<rect x="383" y="318" width="25" height="19" fill="#7cb47c"/><rect x="383" y="318" width="24" height="18" fill="#003400"/><rect x="384" y="319" width="23" height="17" fill="#000"/>
<polyline points="385.5,331.5 395.5,321.5 405.5,331.5" stroke="#ffff00" stroke-width="1" fill="none" shape-rendering="crispEdges"/>
<rect x="489" y="318" width="25" height="19" fill="#7cb47c"/><rect x="489" y="318" width="24" height="18" fill="#003400"/><rect x="490" y="319" width="23" height="17" fill="#000"/>
<polyline points="491.5,331.5 499.5,321.5 507.5,331.5 511.5,326.5" stroke="#ff5050" stroke-width="1" fill="none" shape-rendering="crispEdges"/>
<rect x="595" y="318" width="25" height="19" fill="#7cb47c"/><rect x="595" y="318" width="24" height="18" fill="#003400"/><rect x="596" y="319" width="23" height="17" fill="#000"/>
<polyline points="597.5,331.5 605.5,321.5 613.5,331.5 617.5,326.5" stroke="#00ff00" stroke-width="1" fill="none" shape-rendering="crispEdges"/>
<text x="308.5" y="331" textLength="52" lengthAdjust="spacingAndGlyphs">Gscint_US</text>
<text x="414.5" y="331" textLength="57" lengthAdjust="spacingAndGlyphs">DS cherenk</text>
<text x="520.5" y="331" textLength="50.5" lengthAdjust="spacingAndGlyphs">Drift scint</text>
<defs>
<linearGradient id="at" x1="0" x2="0" y1="0" y2="1"><stop offset="0" stop-color="#b0b0b0"/><stop offset="0.45" stop-color="#8e8e8e"/><stop offset="0.7" stop-color="#828282"/><stop offset="1" stop-color="#8e8e8e"/></linearGradient>
<linearGradient id="al" x1="0" x2="1" y1="0" y2="0"><stop offset="0" stop-color="#acacac"/><stop offset="0.3" stop-color="#929292"/><stop offset="0.65" stop-color="#7e7e7e"/><stop offset="0.8" stop-color="#9a9a9a"/><stop offset="1" stop-color="#a2a2a2"/></linearGradient>
<linearGradient id="ac" x1="0" x2="1" y1="0" y2="0"><stop offset="0" stop-color="#b6b6b6"/><stop offset="0.35" stop-color="#a8a8a8"/><stop offset="1" stop-color="#7a7a7a"/></linearGradient>
<linearGradient id="arr" x1="0" x2="1" y1="0" y2="0"><stop offset="0" stop-color="#a2a2a2"/><stop offset="0.6" stop-color="#b8b8b8"/><stop offset="1" stop-color="#bababa"/></linearGradient>
<linearGradient id="abb" x1="0" x2="0" y1="0" y2="1"><stop offset="0" stop-color="#a6a6a6"/><stop offset="1" stop-color="#bababa"/></linearGradient>
<linearGradient id="arow" x1="0" x2="0" y1="0" y2="1"><stop offset="0" stop-color="#b8b8b8"/><stop offset="0.38" stop-color="#b2b2b2"/><stop offset="0.42" stop-color="#9e9e9e"/><stop offset="0.75" stop-color="#808080"/><stop offset="1" stop-color="#8e8e8e"/></linearGradient>
</defs>
<rect x="300" y="342" width="329" height="56" fill="#bcbcbc"/>
<rect x="621" y="342" width="8" height="56" fill="url(#arr)"/>
<rect x="300" y="394" width="329" height="4" fill="url(#abb)"/>
<polygon points="621,394 629,394 629,398 625,398" fill="url(#arr)"/>
<polygon points="300,342 629,342 621,350 300,350" fill="url(#at)"/>
<rect x="300" y="367" width="321" height="10" fill="url(#arow)"/>
<polygon points="621,371 628,370 621,377" fill="#8a8a8a"/>
<polygon points="300,342 308,350 308,367 300,375" fill="url(#al)"/>
<polygon points="300,375 308,377 308,394 300,398" fill="url(#al)"/>
<polygon points="407,350 410.5,346.5 415,350 415,367 407,367" fill="url(#ac)"/>
<polygon points="407,377 410.5,373.5 415,377 415,394 407,394" fill="url(#ac)"/>
<polygon points="514,350 517.5,346.5 522,350 522,367 514,367" fill="url(#ac)"/>
<polygon points="514,377 517.5,373.5 522,377 522,394 514,394" fill="url(#ac)"/>
<rect x="308" y="350" width="99" height="17" fill="#fafafa"/>
<text x="311" y="362.7" textLength="19.5" lengthAdjust="spacingAndGlyphs">0.01</text>
<rect x="308" y="377" width="99" height="17" fill="#fafafa"/>
<text x="311" y="389.7" textLength="13.5" lengthAdjust="spacingAndGlyphs">0.1</text>
<rect x="415" y="350" width="99" height="17" fill="#fafafa"/>
<text x="418" y="362.7" textLength="25.5" lengthAdjust="spacingAndGlyphs">0.001</text>
<rect x="415" y="377" width="99" height="17" fill="#fafafa"/>
<text x="418" y="389.7" textLength="4.5" lengthAdjust="spacingAndGlyphs">1</text>
<rect x="522" y="350" width="99" height="17" fill="#fafafa"/>
<text x="525" y="362.7" textLength="30.5" lengthAdjust="spacingAndGlyphs">-0.001</text>
<rect x="522" y="377" width="99" height="17" fill="#fafafa"/>
<text x="525" y="389.7" textLength="13.5" lengthAdjust="spacingAndGlyphs">0.1</text>
<text x="25.5" y="366" textLength="170" lengthAdjust="spacingAndGlyphs">Offset and scale for display only.</text>
<text x="25.5" y="381" textLength="140" lengthAdjust="spacingAndGlyphs">True voltages saved to .csv</text>
<text x="256" y="355" textLength="40.5" lengthAdjust="spacingAndGlyphs" style="font-weight:bold;font-size:12.5px">Offsets</text>
<text x="268.5" y="387" textLength="29" lengthAdjust="spacingAndGlyphs" style="font-weight:bold;font-size:12.5px">Scale</text>
</svg></body></html>
